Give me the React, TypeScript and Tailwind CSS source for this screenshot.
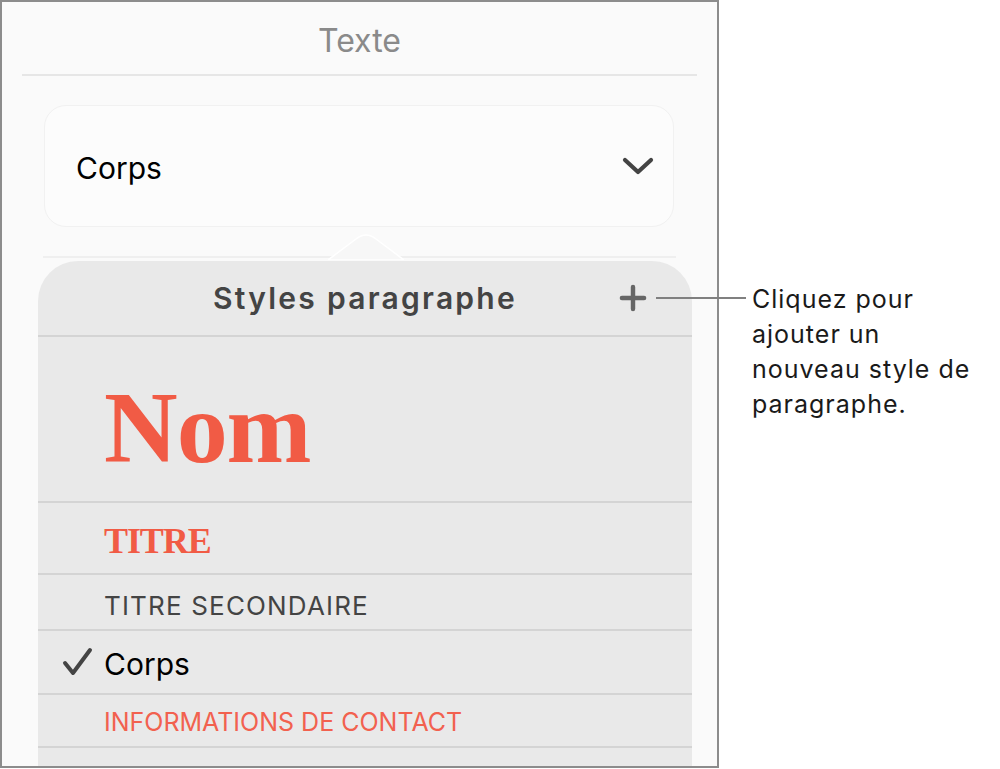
import { Plus } from "lucide-react";

const sans = "font-['Inter','Liberation_Sans',sans-serif]";
const serif = "font-['Liberation_Serif','DejaVu_Serif',serif]";

function Divider({ className = "" }: { className?: string }) {
  return <div className={`h-[2px] ${className}`} />;
}

function Chevron() {
  return (
    <svg width="32" height="20" viewBox="0 0 32 20" fill="none">
      <polyline points="3,4 16,16 29,4" stroke="#444" strokeWidth="4.2" strokeLinecap="round" strokeLinejoin="round" />
    </svg>
  );
}

function Check() {
  return (
    <svg width="32" height="30" viewBox="0 0 32 30" fill="none">
      <polyline points="3,16 11,26 28,3" stroke="#444" strokeWidth="4" strokeLinecap="round" strokeLinejoin="round" />
    </svg>
  );
}

export default function App() {
  return (
    <div className={`relative flex min-h-screen bg-white ${sans}`}>
      <div className="h-[768px] w-[719px] shrink-0 overflow-hidden border-2 border-[#8c8c8c] bg-[#fafafa]">
        <div className="h-[72px] pt-[23px] text-center text-[32px] leading-none text-[#8a8a8a]">Texte</div>
        <Divider className="mx-[20px] bg-[#e6e6e6]" />

        <div className="ml-[42px] mt-[29px] flex h-[122px] w-[630px] items-center justify-between rounded-[22px] border border-[#f1f1f1] bg-[#fcfcfc] pl-[31px] pr-[19px]">
          <span className="mt-[4px] text-[30px] leading-none text-black">Corps</span>
          <Chevron />
        </div>

        <Divider className="ml-[41px] mt-[29px] w-[633px] bg-[#efefef]" />

        <div className="relative ml-[36px] mt-[3px] w-[654px] rounded-t-[40px] bg-[#e9e9e9]">
          <svg className="absolute left-[290px] top-[-28px]" width="76" height="27" viewBox="0 0 76 27">
            <path d="M0 27 L28 6 Q38 -2 48 6 L76 27 Z" fill="#f7f7f7" stroke="#ffffff" strokeWidth="1.5" />
          </svg>

          <div className="relative flex h-[74px] items-center justify-center">
            <span className="text-[30px] font-semibold leading-none tracking-[0.075em] text-[#444]">Styles paragraphe</span>
            <Plus className="absolute right-[40px] top-[18px] text-[#666]" size={38} strokeWidth={2.8} />
          </div>
          <Divider className="bg-[#d4d4d4]" />

          <div className={`h-[164px] pl-[66px] pt-[40px] text-[102px] font-bold leading-none tracking-[-0.01em] text-[#f15b45] ${serif}`}>Nom</div>
          <Divider className="bg-[#d4d4d4]" />

          <div className={`h-[70px] pl-[66px] pt-[20px] text-[36px] font-bold leading-none tracking-[-0.03em] text-[#f15b45] ${serif}`}>TITRE</div>
          <Divider className="bg-[#d4d4d4]" />

          <div className="h-[54px] pl-[66px] pt-[18px] text-[26px] leading-none tracking-[0.045em] text-[#444]">TITRE SECONDAIRE</div>
          <Divider className="bg-[#d4d4d4]" />

          <div className="flex h-[62px] items-start pl-[24px] pt-[16px]">
            <Check />
            <span className="ml-[10px] pt-[2px] text-[30px] leading-none text-black">Corps</span>
          </div>
          <Divider className="bg-[#d4d4d4]" />

          <div className="h-[51px] pl-[66px] pt-[15px] text-[25px] leading-none text-[#f2614f]">INFORMATIONS DE CONTACT</div>
          <Divider className="bg-[#d4d4d4]" />
          <div className="h-[40px]" />
        </div>
      </div>

      <div className="absolute left-[656px] top-[297px] h-[2px] w-[90px] bg-[#808080]" />

      <div className="ml-[33px] mt-[282px] text-[25px] leading-[35px] tracking-[0.04em] text-[#1a1a1a]">
        Cliquez pour
        <br />
        ajouter un
        <br />
        nouveau style de
        <br />
        paragraphe.
      </div>
    </div>
  );
}
